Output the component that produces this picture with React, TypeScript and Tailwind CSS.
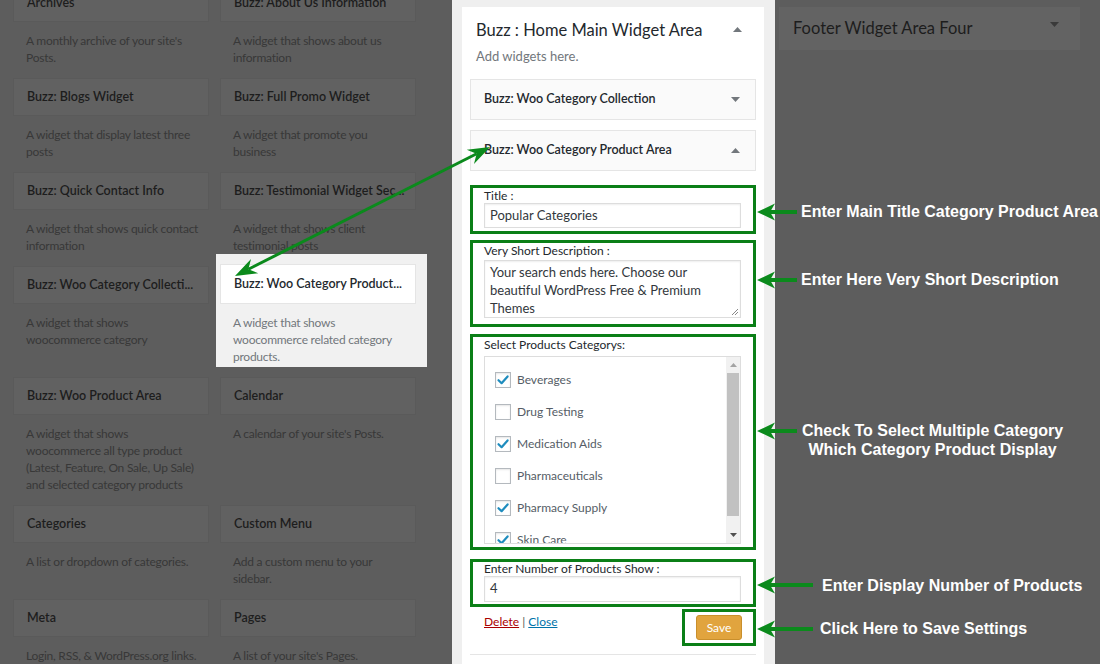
import React from "react";

type Item = { title: string; desc: string[]; hl?: boolean };

const rows: Item[][] = [
  [
    { title: "Archives", desc: ["A monthly archive of your site's", "Posts."] },
    { title: "Buzz: About Us Information", desc: ["A widget that shows about us", "information"] },
  ],
  [
    { title: "Buzz: Blogs Widget", desc: ["A widget that display latest three", "posts"] },
    { title: "Buzz: Full Promo Widget", desc: ["A widget that promote you", "business"] },
  ],
  [
    { title: "Buzz: Quick Contact Info", desc: ["A widget that shows quick contact", "information"] },
    { title: "Buzz: Testimonial Widget Sec...", desc: ["A widget that shows client", "testimonial posts"] },
  ],
  [
    { title: "Buzz: Woo Category Collecti...", desc: ["A widget that shows", "woocommerce category"] },
    {
      title: "Buzz: Woo Category Product...",
      desc: ["A widget that shows", "woocommerce related category", "products."],
      hl: true,
    },
  ],
  [
    {
      title: "Buzz: Woo Product Area",
      desc: ["A widget that shows", "woocommerce all type product", "(Latest, Feature, On Sale, Up Sale)", "and selected category products"],
    },
    { title: "Calendar", desc: ["A calendar of your site's Posts."] },
  ],
  [
    { title: "Categories", desc: ["A list or dropdown of categories."] },
    { title: "Custom Menu", desc: ["Add a custom menu to your", "sidebar."] },
  ],
  [
    { title: "Meta", desc: ["Login, RSS, & WordPress.org links."] },
    { title: "Pages", desc: ["A list of your site's Pages."] },
  ],
];

const Tri = ({ up, color, w = 9, h = 5 }: { up?: boolean; color: string; w?: number; h?: number }) => (
  <svg width={w} height={h} viewBox={`0 0 ${w} ${h}`} className="block">
    <path d={up ? `M0 ${h} L${w} ${h} L${w / 2} 0Z` : `M0 0 L${w} 0 L${w / 2} ${h}Z`} fill={color} />
  </svg>
);

function WidgetCard({ item }: { item: Item }) {
  if (item.hl) {
    return (
      <div className="-ml-[4px] -mr-[11px] -mt-[12px] mb-[10px] pl-[4px] pr-[11px] pt-[10px] bg-[#f1f1f1] self-start pb-[2px]">
        <div className="h-[40px] bg-white border border-[#e5e5e5] flex items-center px-[13px]">
          <span className="text-[12.5px] font-semibold text-[#23282d] whitespace-nowrap">{item.title}</span>
        </div>
        <div className="pt-[10px] px-[13px] text-[12px] tracking-[-0.25px] leading-[17px] text-[#72777c]">
          {item.desc.map((d, i) => (
            <div key={i} className="whitespace-nowrap">{d}</div>
          ))}
        </div>
      </div>
    );
  }
  return (
    <div className="pb-[12px]">
      <div className="h-[38px] bg-[#616161] border border-[#5a5a5a] flex items-center px-[13px]">
        <span className="text-[12.5px] font-semibold text-[#1d1d1d] whitespace-nowrap">{item.title}</span>
      </div>
      <div className="pt-[10px] px-[13px] text-[12px] tracking-[-0.25px] leading-[17px] text-[#383838]">
        {item.desc.map((d, i) => (
          <div key={i} className="whitespace-nowrap">{d}</div>
        ))}
      </div>
    </div>
  );
}

const Check = () => (
  <svg width="14" height="14" viewBox="0 0 14 14" className="block">
    <path d="M2.5 7.2 L5.6 10.2 L11.6 3.4" stroke="#1e8cbe" strokeWidth="2.2" fill="none" strokeLinecap="round" strokeLinejoin="round" />
  </svg>
);

const cats: [string, boolean][] = [
  ["Beverages", true],
  ["Drug Testing", false],
  ["Medication Aids", true],
  ["Pharmaceuticals", false],
  ["Pharmacy Supply", true],
  ["Skin Care", true],
];

const G = "border-[3px] border-[#0b7f17]";

function HArrow({ y, x2 }: { y: number; x2: number }) {
  const tip = 757;
  return (
    <g>
      <line x1={tip + 10} y1={y} x2={x2} y2={y} stroke="#0b8a1c" strokeWidth="4" />
      <polygon points={`${tip},${y} ${tip + 18},${y - 8.5} ${tip + 13},${y} ${tip + 18},${y + 8.5}`} fill="#0b8a1c" />
    </g>
  );
}

export default function App() {
  const ax = 235, ay = 276, bx = 490, by = 147;
  const dx = bx - ax, dy = by - ay;
  const L = Math.hypot(dx, dy);
  const ux = dx / L, uy = dy / L;
  const nx = -uy, ny = ux;
  const hl = 22, hw = 8, notch = 15;
  const head = (tx: number, ty: number, s: number) => {
    const bxc = tx - s * ux * hl, byc = ty - s * uy * hl;
    const nxc = tx - s * ux * notch, nyc = ty - s * uy * notch;
    return `${tx},${ty} ${bxc + nx * hw},${byc + ny * hw} ${nxc},${nyc} ${bxc - nx * hw},${byc - ny * hw}`;
  };

  return (
    <div
      className="relative w-[1100px] h-[664px] overflow-hidden bg-[#5d5d5d] flex"
      style={{ fontFamily: "Lato, 'Open Sans', sans-serif" }}
    >
      {/* left widget list */}
      <div className="w-[452px] shrink-0 pl-[13px]">
        <div className="-mt-[16px] grid grid-cols-[196px_196px] gap-x-[11px]">
          {rows.flatMap((r, ri) => r.map((it, ci) => <WidgetCard key={`${ri}-${ci}`} item={it} />))}
        </div>
      </div>

      {/* center sidebar */}
      <div className="w-[323px] shrink-0 bg-[#efefef] pl-[10px] pr-[11px] pt-[7px]">
        <div className="bg-white h-full px-[8px] pt-[12px]">
          <div className="flex items-start justify-between pl-[6px] pr-[14px]">
            <div className="text-[16.5px] leading-[22px] text-[#23282d]">Buzz : Home Main Widget Area</div>
            <div className="pt-[8px]">
              <Tri up color="#72777c" />
            </div>
          </div>
          <div className="pl-[6px] mt-[6px] text-[13px] leading-[18px] text-[#72777c]">Add widgets here.</div>

          <div className="mt-[14px] h-[41px] border border-[#e5e5e5] bg-[#fafafa] flex items-center justify-between pl-[13px] pr-[15px]">
            <span className="text-[12.5px] font-semibold text-[#23282d]">Buzz: Woo Category Collection</span>
            <Tri color="#72777c" />
          </div>

          <div className="mt-[10px] border border-[#e5e5e5]">
            <div className="h-[40px] bg-[#fafafa] border-b border-[#e5e5e5] flex items-center justify-between pl-[13px] pr-[15px]">
              <span className="text-[12.5px] font-semibold text-[#23282d]">Buzz: Woo Category Product Area</span>
              <Tri up color="#72777c" />
            </div>
            <div className="bg-white pt-[14px] pb-[8px] -mx-px">
              {/* Title */}
              <div className={`${G} pl-[11px] pr-[12px] pb-[3px]`}>
                <div className="text-[12px] leading-[15px] text-[#23282d]">Title :</div>
                <div className="h-[25px] border border-[#dddddd] shadow-[inset_0_1px_2px_rgba(0,0,0,0.07)] flex items-center px-[5px] text-[13px] text-[#32373c]">
                  Popular Categories
                </div>
              </div>
              {/* Desc */}
              <div className={`${G} mt-[6px] pl-[11px] pr-[12px] pb-[6px]`}>
                <div className="text-[12px] leading-[15px] text-[#23282d]">Very Short Description :</div>
                <div className="relative mt-[2px] h-[58px] border border-[#dddddd] shadow-[inset_0_1px_2px_rgba(0,0,0,0.07)] px-[5px] pt-[2px] text-[13px] leading-[18px] text-[#32373c]">
                  <div>Your search ends here. Choose our</div>
                  <div>beautiful WordPress Free &amp; Premium</div>
                  <div>Themes</div>
                  <svg width="8" height="8" viewBox="0 0 8 8" className="absolute right-[1px] bottom-[1px]">
                    <path d="M7 1 L1 7 M7 4 L4 7" stroke="#888" strokeWidth="1" />
                  </svg>
                </div>
              </div>
              {/* Categories */}
              <div className={`${G} mt-[7px] pl-[11px] pr-[12px] pb-[3px]`}>
                <div className="text-[12px] leading-[15px] text-[#23282d]">Select Products Categorys:</div>
                <div className="mt-[4px] h-[188px] border border-[#dddddd] flex overflow-hidden">
                  <div className="flex-1 pt-[7px] pl-[10px]">
                    {cats.map(([c, on]) => (
                      <div key={c} className="h-[32px] flex items-center gap-[6px]">
                        <div className="w-[16px] h-[16px] border border-[#b4b9be] bg-white shadow-[inset_0_1px_2px_rgba(0,0,0,0.1)] flex items-center justify-center">
                          {on && <Check />}
                        </div>
                        <span className="text-[12px] text-[#555d66]">{c}</span>
                      </div>
                    ))}
                  </div>
                  <div className="w-[14px] bg-[#f1f1f1] flex flex-col items-center">
                    <div className="h-[16px] flex items-center justify-center">
                      <Tri up color="#a3a3a3" w={7} h={4} />
                    </div>
                    <div className="w-[12px] h-[143px] bg-[#c1c1c1]" />
                    <div className="flex-1" />
                    <div className="h-[16px] flex items-center justify-center">
                      <Tri color="#505050" w={7} h={4} />
                    </div>
                  </div>
                </div>
              </div>
              {/* Number */}
              <div className={`${G} mt-[9px] pl-[11px] pr-[12px] pb-[2px]`}>
                <div className="text-[12px] leading-[14px] text-[#23282d]">Enter Number of Products Show :</div>
                <div className="h-[26px] border border-[#dddddd] shadow-[inset_0_1px_2px_rgba(0,0,0,0.07)] flex items-center px-[5px] text-[13px] text-[#32373c]">
                  4
                </div>
              </div>
              {/* actions */}
              <div className="mt-[2px] flex items-start justify-between">
                <div className="pl-[14px] pt-[5px] text-[12px] leading-[16px] text-[#555]">
                  <span className="text-[#a00] underline">Delete</span> | <span className="text-[#0073aa] underline">Close</span>
                </div>
                <div className={`${G} w-[74px] h-[37px] pl-[11px] pt-[3px]`}>
                  <div className="w-[46px] h-[25px] rounded-[3px] bg-[#e1a43e] border border-[#c98f2c] flex items-center justify-center text-[12px] text-white">
                    Save
                  </div>
                </div>
              </div>
            </div>
          </div>
        </div>
      </div>

      {/* right area */}
      <div className="flex-1 pl-[4px] pt-[7px]">
        <div className="w-[301px] h-[43px] bg-[#636363] flex items-center justify-between pl-[14px] pr-[21px]">
          <span className="text-[16.5px] text-[#1d1d1d]">Footer Widget Area Four</span>
          <div className="-mt-[8px]">
            <Tri color="#3a3a3a" />
          </div>
        </div>
      </div>

      {/* annotation overlay */}
      <svg className="absolute inset-0 pointer-events-none" width="1100" height="664" viewBox="0 0 1100 664">
        <line
          x1={ax + ux * notch}
          y1={ay + uy * notch}
          x2={bx - ux * notch}
          y2={by - uy * notch}
          stroke="#0b8a1c"
          strokeWidth="3"
        />
        <polygon points={head(bx, by, 1)} fill="#0b8a1c" />
        <polygon points={head(ax, ay, -1)} fill="#0b8a1c" />
        <HArrow y={212} x2={797} />
        <HArrow y={280} x2={797} />
        <HArrow y={431} x2={797} />
        <HArrow y={585} x2={813} />
        <HArrow y={629} x2={813} />
      </svg>
      <div
        className="absolute inset-0 pointer-events-none text-white font-bold text-[16px] leading-[19px]"
        style={{ fontFamily: "'Liberation Sans', Arial, sans-serif" }}
      >
        <div className="absolute left-[801px] top-[202px] whitespace-nowrap">Enter Main Title Category Product Area</div>
        <div className="absolute left-[801px] top-[270px] whitespace-nowrap">Enter Here Very Short Description</div>
        <div className="absolute left-[802px] top-[421px] whitespace-nowrap text-center">
          Check To Select Multiple Category
          <br />
          Which Category Product Display
        </div>
        <div className="absolute left-[822px] top-[576px] whitespace-nowrap">Enter Display Number of Products</div>
        <div className="absolute left-[820px] top-[619px] whitespace-nowrap">Click Here to Save Settings</div>
      </div>
    </div>
  );
}
